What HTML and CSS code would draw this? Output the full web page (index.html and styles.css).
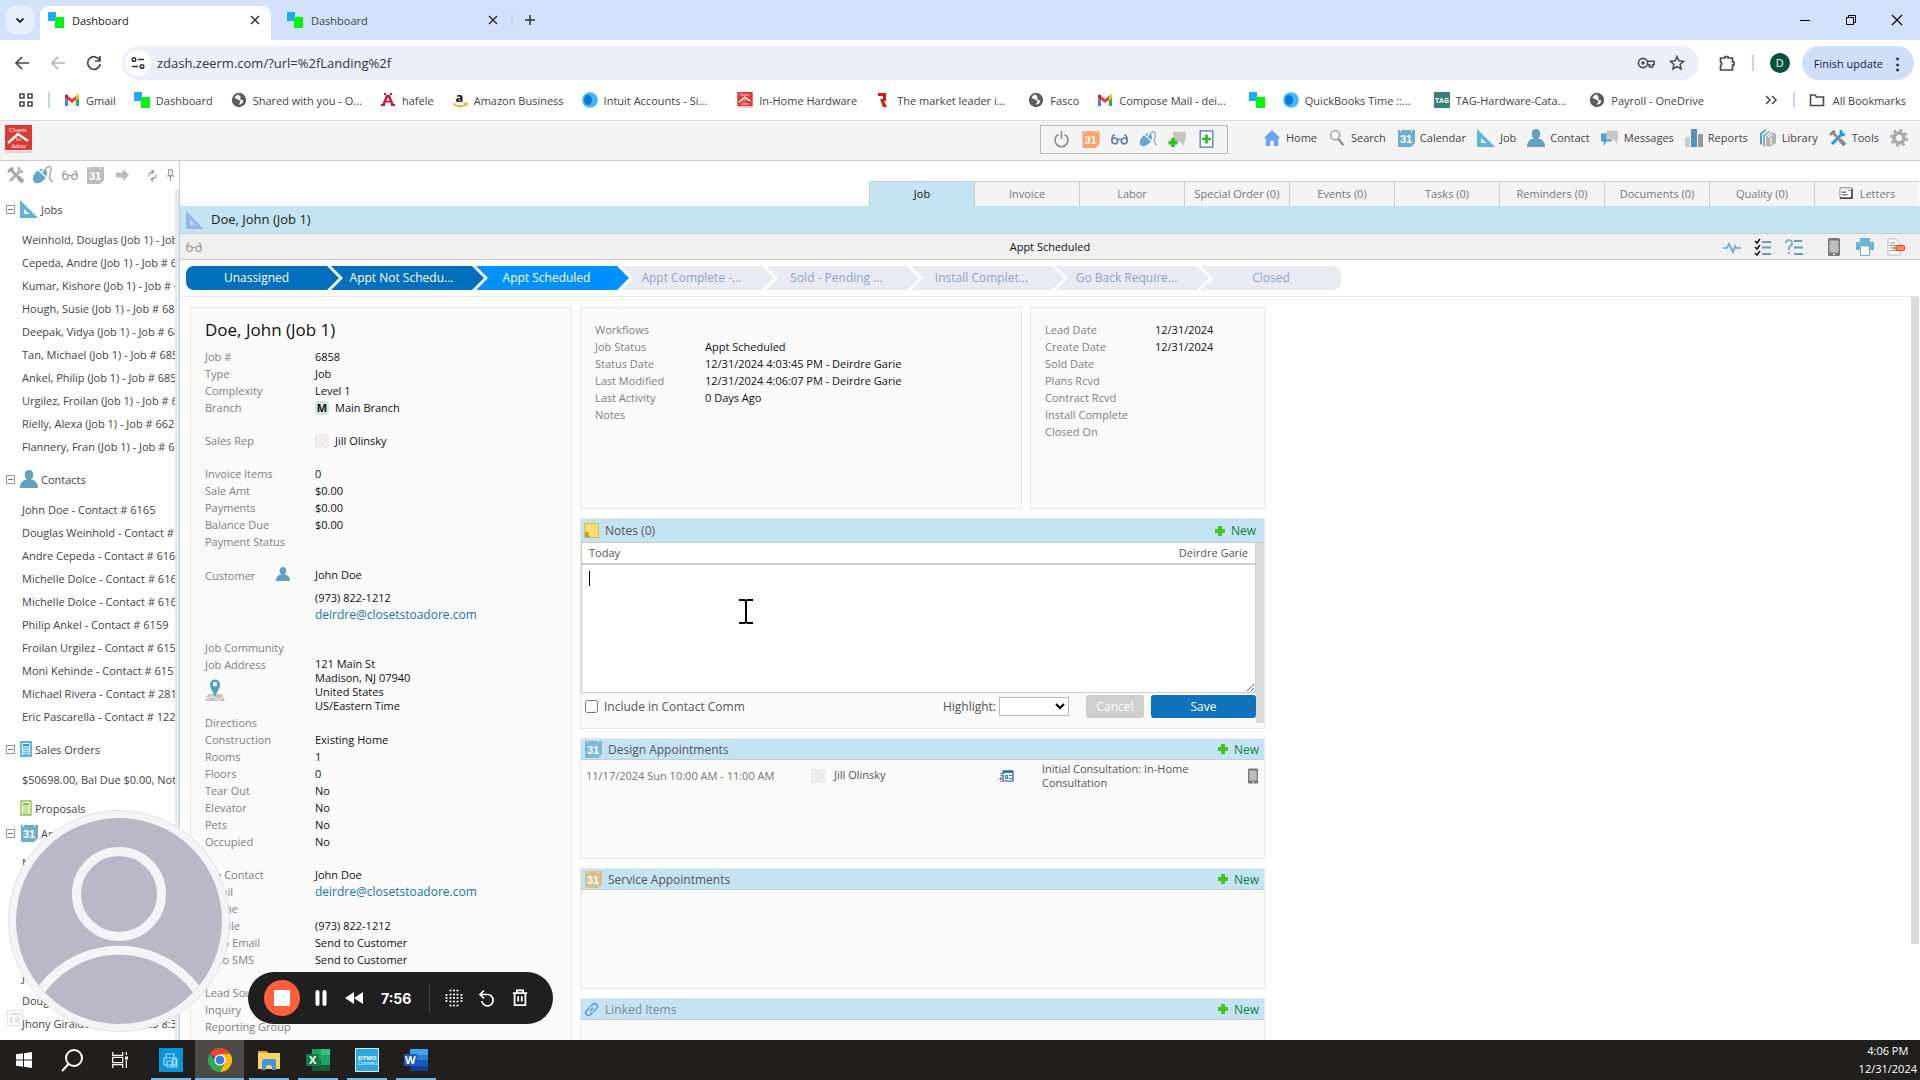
FILE: index.html
```html
<!DOCTYPE html>
<html lang="en">
<head>
  <meta charset="UTF-8" />
  <meta name="viewport" content="width=device-width, initial-scale=1.0">
  <title>Dashboard</title>
  <link rel="stylesheet" href="styles.css">
</head>
<body>

<!-- icon sprite -->
<svg class="sprite" aria-hidden="true">
  <symbol id="i-dash" viewBox="0 0 16 16"><path fill="#1fa9f9" d="M0 0h8v9H0z"/><path fill="#00f60a" d="M7 5h9v11H7z"/></symbol>
  <symbol id="i-gmail" viewBox="0 0 16 16"><path fill="#4285f4" d="M1 14V6l3 2v6z"/><path fill="#34a853" d="M12 14V8l3-2v8z"/><path fill="#ea4335" d="M4 8V4l4 3 4-3v4l-4 3z"/><path fill="#c5221f" d="M1 6V4c0-1.600 1.700-2 3-.800V8z"/><path fill="#fbbc04" d="M12 8V3.200C13.300 2 15 2.600 15 4v2z"/></symbol>
  <symbol id="i-globe" viewBox="0 0 16 16"><circle cx="8" cy="8" r="7.200" fill="#5a5d61"/><path fill="#fff" d="M9 2.500c-3 0-5 1.500-5.300 3.500 1.300 1 2.500.500 3.300 1.500.700 1 2.300.500 2.500 2 0 1.300-1.500 1.700-1.500 3.300 2.500-.300 4-2 4.300-4-1-.800-2.300-.400-3-1.500-.500-1 .7-1.500.2-2.500-.4-.8-1.500-.5-1.500-1.300z"/></symbol>
  <symbol id="i-hafele" viewBox="0 0 16 16"><path fill="#d5123d" d="M4 1h2v2H4zm6 0h2v2h-2zM6 3h4l3.500 9H15v2h-4v-2l-.6-1.500H5.600L5 12v2H1v-2h1.500zm2 2L6.300 8.800h3.400z"/></symbol>
  <symbol id="i-amazon" viewBox="0 0 16 16"><text x="3.500" y="10" class="t-amz">a</text><path d="M1.500 11.500c4 3.500 9 3.500 13 .5M12.500 11.500l2.300-.2-.6 2.400" fill="none" stroke="#f90" stroke-width="1.500"/></symbol>
  <symbol id="i-intuit" viewBox="0 0 16 16"><circle cx="8" cy="8" r="7.800" fill="#3fb7f8"/><ellipse cx="6" cy="8" rx="4" ry="5" fill="#0a78d4"/></symbol>
  <symbol id="i-closets" viewBox="0 0 27 28"><path fill="#dc3a36" d="M0 0h27v25H0z"/><path fill="#f6c9c8" d="M0 26h27v2H0z"/><path d="M3 18 13 9l10 7" fill="none" stroke="#fff" stroke-width="2.400"/><text x="4" y="7" class="t-logo">Closets</text><text x="11" y="16" class="t-logo">to</text><text x="6" y="23" class="t-logo">Adore</text></symbol>
  <symbol id="i-r" viewBox="0 0 16 16"><path fill="#da1c10" d="M3 1h8v8H9l3 6H8L5 7h3V4H3z"/></symbol>
  <symbol id="i-tag" viewBox="0 0 16 16"><path fill="#35807a" d="M0 0h16v16H0z"/><text x="1" y="11" class="t-tag">TAG</text></symbol>
  <symbol id="i-folder" viewBox="0 0 16 16"><path d="M1.500 3h4.500l1.500 2h7v8.500h-13z" fill="none" stroke="#474a4d" stroke-width="1.600"/></symbol>
  <symbol id="i-chev" viewBox="0 0 16 16"><path d="m4.500 6.500 3.500 3.500 3.500-3.500" fill="none" stroke="#202124" stroke-width="1.800"/></symbol>
  <symbol id="i-x" viewBox="0 0 16 16"><path d="m4 4 8 8m0-8-8 8" fill="none" stroke="#303235" stroke-width="1.500"/></symbol>
  <symbol id="i-add" viewBox="0 0 16 16"><path d="M8 3v10M3 8h10" fill="none" stroke="#303235" stroke-width="1.500"/></symbol>
  <symbol id="i-back" viewBox="0 0 16 16"><path d="M15 8H2m6-6L2 8l6 6" fill="none" stroke="currentColor" stroke-width="1.700"/></symbol>
  <symbol id="i-reload" viewBox="0 0 16 16"><path d="M13.500 5A6.300 6.300 0 1 0 14.200 9M14 1v5H9" fill="none" stroke="#474a4d" stroke-width="1.700"/></symbol>
  <symbol id="i-tune" viewBox="0 0 16 16"><g fill="none" stroke="#303235" stroke-width="1.500"><circle cx="4" cy="4.500" r="1.800"/><circle cx="12" cy="11.500" r="1.800"/><path d="M8 4.500h6M2 11.500h6"/></g></symbol>
  <symbol id="i-key" viewBox="0 0 18 14"><g fill="none" stroke="#474a4d" stroke-width="1.600"><circle cx="6" cy="7" r="4.600"/><circle cx="6" cy="7" r="1"/><path d="M10 5.300h7v3.400h-1.500V11h-3V8.700h-2"/></g></symbol>
  <symbol id="i-star" viewBox="0 0 16 16"><path d="m8 1.500 1.900 4.300 4.700.5-3.500 3.100 1 4.600L8 11.600 3.900 14l1-4.600L1.400 6.300l4.700-.5z" fill="none" stroke="#474a4d" stroke-width="1.500"/></symbol>
  <symbol id="i-ext" viewBox="0 0 16 16"><path d="M1.500 3H6V1.500h3V3h4.500v4H15v3h-1.500v5h-12v-4.500q2.500-1.500 0-3.500z" fill="none" stroke="#474a4d" stroke-width="1.700"/></symbol>
  <symbol id="i-apps" viewBox="0 0 16 16"><path d="M2 2h4v4H2zm8 0h4v4h-4zM2 10h4v4H2zm8 0h4v4h-4z" fill="none" stroke="#474a4d" stroke-width="1.600"/></symbol>
  <symbol id="i-more" viewBox="0 0 16 16"><path d="m3 4 4 4-4 4m6-8 4 4-4 4" fill="none" stroke="#474a4d" stroke-width="1.500"/></symbol>

  <symbol id="i-power" viewBox="0 0 16 18"><path d="M5 4.500a6.500 6.500 0 1 0 6 0M8 1v8" fill="none" stroke="#8a8a8a" stroke-width="1.600"/></symbol>
  <symbol id="i-cal" viewBox="0 0 18 18"><path fill="currentColor" d="M1 1h2v2h1V1h10v2h1V1h3v13l-4 4H1z"/><text x="3" y="14" class="t-cal">31</text></symbol>
  <symbol id="i-glasses" viewBox="0 0 20 14"><g fill="none" stroke="currentColor" stroke-width="1.700"><circle cx="5" cy="9" r="3"/><circle cx="15" cy="9" r="3"/><path d="M8 8q2-1.500 4 0M2 8q0-5 3-5.500M18 8q0-5-3-5.500"/></g></symbol>
  <symbol id="i-mouse" viewBox="0 0 22 20"><ellipse cx="8" cy="11" rx="5.600" ry="8.500" transform="rotate(42 8 11)" fill="#5fa9d0"/><path d="m6 5 8 7M12 4 9 8" stroke="#fff" stroke-width="1.300"/><path d="M13 5q3-5 5-3t0 7 3 8" fill="none" stroke="#9aa5ab" stroke-width="1.400"/></symbol>
  <symbol id="i-msgadd" viewBox="0 0 20 20"><path fill="#c4c4c4" d="M5 2h14v11h-2v5l-4-5H5z"/><path fill="#2dc422" d="M3 9h4v3h3v4H7v3H3v-3H0v-4h3z"/></symbol>
  <symbol id="i-docadd" viewBox="0 0 16 20"><path fill="#fff" stroke="#4d78ad" stroke-width="1.400" d="M1 1h14v18H1z"/><path fill="#20bf20" d="M6.500 5h3v3.500H13v3H9.500V15h-3v-3.500H3v-3h3.500z"/></symbol>
  <symbol id="i-home" viewBox="0 0 20 20"><path fill="#6ba5ec" d="m10 1 9 9h-2v9h-5v-6H8v6H3v-9H1z"/></symbol>
  <symbol id="i-search" viewBox="0 0 18 20"><circle cx="7" cy="7" r="5" fill="#fff" stroke="#9d9d9d" stroke-width="1.700"/><path d="m10.500 11 5.500 7" stroke="#8e8e8e" stroke-width="2.600"/></symbol>
  <symbol id="i-tri" viewBox="0 0 18 18"><path fill="currentColor" fill-rule="evenodd" d="M0 0v18h18zM4 9v5h5.500z"/></symbol>
  <symbol id="i-person" viewBox="0 0 18 18"><path fill="#62a1c0" d="M9 0c5.500 0 5 8 2 9.500 4 .5 7 3 7 8.500H0c0-5.500 3-8 7-8.500C4 8 3.500 0 9 0"/></symbol>
  <symbol id="i-msgs" viewBox="0 0 20 18"><path fill="#4ba2d6" d="M0 4h12v9H6l-3 5v-5H0z"/><path fill="#c8c8c8" d="M6 1h13v10h-1v5l-4-5H6z"/></symbol>
  <symbol id="i-chart" viewBox="0 0 18 18"><path fill="#ccc" d="M0 8h5v10H0z"/><path fill="#5093c0" d="M6 0h6v18H6z"/><path fill="#999" d="M13 5h5v13h-5z"/></symbol>
  <symbol id="i-library" viewBox="0 0 18 18"><path fill="#589dc9" d="m1 4 6-4v2L3 5v11l-2-1z"/><path fill="#7fb2cf" d="m4 6 6-4 1 1-5 4v11l-2-1z"/><path fill="#b3b3b3" d="m7 8 6-5 4 2v9l-6 4-4-1z"/><path d="m9 8 5-3M12 8v8" stroke="#f4f4f4" stroke-width="1.200"/></symbol>
  <symbol id="i-tools" viewBox="0 0 18 18"><path d="M3 15 14 4" stroke="var(--w, #1a9be6)" stroke-width="3"/><path d="M12 1v4l4 1" fill="none" stroke="var(--w, #1a9be6)" stroke-width="2.600"/><path d="M4 4l10 10M1 6l4-4M3 5l3-3" stroke="var(--g, #8d8d8d)" stroke-width="2.600"/><path d="m11 11 5 5" stroke="var(--g, #8d8d8d)" stroke-width="4"/></symbol>
  <symbol id="i-gear" viewBox="0 0 20 20"><circle cx="10" cy="10" r="5.500" fill="none" stroke="#ababab" stroke-width="4"/><circle cx="10" cy="10" r="8.500" fill="none" stroke="#ababab" stroke-width="3" stroke-dasharray="3.340 3.340"/></symbol>
  <symbol id="i-letter" viewBox="0 0 16 14"><path fill="#fff" stroke="#777" d="M1 1h14v12H1z"/><path d="M1 13h14V2" fill="none" stroke="#222" stroke-width="1.500"/><path d="M3 6h5M3 9h7M11 4h2" stroke="#555" stroke-width="1.300"/></symbol>
  <symbol id="i-arrow" viewBox="0 0 14 12"><path fill="#b9b9b9" d="M0 3.500h7V0l6 6-6 6V8.500H0z"/></symbol>
  <symbol id="i-refresh" viewBox="0 0 12 14"><path d="M2 8q0-5 5-5M5 .5 7.500 3 5 5.500M10 6q0 5-5 5m2-2.500L4.500 11 7 13.500" fill="none" stroke="#999" stroke-width="1.200"/></symbol>
  <symbol id="i-pin" viewBox="0 0 10 14"><path d="M3 1h4v6H3zM1 7.500h8M5 8v5" fill="none" stroke="#999" stroke-width="1.200"/></symbol>
  <symbol id="i-doc" viewBox="0 0 12 16"><path fill="#fff" stroke="currentColor" stroke-width="1.400" d="M1 1h10v14H1z"/><path d="M3 4.200h6" stroke="currentColor" stroke-width="2.400"/><path d="M3 7h6M3 9.200h6M3 11.200h6M3 13.200h6" stroke="currentColor"/></symbol>
  <symbol id="i-grid" viewBox="0 0 16 16"><path d="M1 1h6v6H1zm8 0h6v6H9zM1 9h6v6H1zm8 0h6v6H9z" fill="#f3f3f3" stroke="#e0e0e0"/></symbol>
  <symbol id="i-map" viewBox="0 0 20 22"><path fill="#c4c4c4" d="m3 15-3 7h20l-3-7z"/><path d="m1 20 7-3 5 4 5-3" stroke="#f5f5f5" fill="none"/><path fill="#519fc0" fill-rule="evenodd" d="M10 18C8 12 5 10 5 5.500a5 5 0 0 1 10 0C15 10 12 12 10 18m0-10.500a2.200 2.200 0 1 0 0-4.400 2.200 2.200 0 0 0 0 4.400"/></symbol>
  <symbol id="i-pulse" viewBox="0 0 18 14"><path d="M0 8h4l2-4 4 8 2-6 1 2h5" fill="none" stroke="#6aa9cf" stroke-width="1.700"/></symbol>
  <symbol id="i-check" viewBox="0 0 18 18"><path d="m1 3 2 2 3-4M1 9l2 2 3-4M1 15l2 2 3-4" fill="none" stroke="#111" stroke-width="1.500"/><path d="M8 4h9M8 9.500h9M8 16h9" stroke="#5ba1bf" stroke-width="2.200"/></symbol>
  <symbol id="i-quest" viewBox="0 0 18 18"><path d="M1 5q0-3 3-3t3 3-3 4v3M4 14v2" fill="none" stroke="#6aa9cf" stroke-width="1.700"/><path d="M9 3h8M9 9.500h9M9 16h9" stroke="#5ba1bf" stroke-width="2.200"/></symbol>
  <symbol id="i-phone" viewBox="0 0 12 18"><rect width="12" height="18" rx="1.500" fill="#777"/><path fill="#bebebe" d="M1.500 2.500h9v12h-9z"/><circle cx="6" cy="16.200" r="1" fill="#fff"/></symbol>
  <symbol id="i-print" viewBox="0 0 18 18"><path fill="#6fb3d0" d="M4 0h10v4h4v8H0V4h4z"/><path fill="#fff" stroke="#6fb3d0" d="M4.500 8h9v9.500h-9z"/></symbol>
  <symbol id="i-docdel" viewBox="0 0 18 18"><path fill="#fff" stroke="#bbb" d="M1 1h8l4 4v12H1z"/><path d="M3 5h5M3 7.500h7M3 10h7M3 12.500h7" stroke="#999"/><path d="M6 10h4" stroke="#d33"/><rect x="9" y="7.500" width="8.500" height="5" rx="1" fill="#fb8a5c" stroke="#e8431f"/></symbol>
  <symbol id="i-plus" viewBox="0 0 12 12"><path fill="#41c61f" d="M4 1h4v3h3v4H8v3H4V8H1V4h3z"/></symbol>
  <symbol id="i-note" viewBox="0 0 14 14"><path fill="#f7e06b" stroke="#dfc045" d="M.5.500h13v13H6l-5.500-5z"/><path fill="#c39a2c" d="M.5 9c2-1 4-.5 4 1 0 1-1 1-1 0L6 13.500H.5z"/></symbol>
  <symbol id="i-card" viewBox="0 0 16 14"><path fill="#fff" stroke="#2452a6" stroke-width="1.200" d="M5 2h10v10H5z"/><path fill="#2f6bd0" d="M5 1.500h10V4H5z"/><path d="M7.500 6.500h2v3h-2z" fill="none" stroke="#2f6bd0"/><path d="M11 6.500h3M11 9.500h3" stroke="#2f6bd0"/><path d="M3 4v9M0 10h3" stroke="#222" stroke-dasharray="1 1"/></symbol>
  <symbol id="i-link" viewBox="0 0 16 16"><g fill="none" stroke="#5aa3ce" stroke-width="1.800" transform="rotate(-45 8 8)"><path d="M8 5H3.500a3 3 0 0 0 0 6H7"/><path d="M8 11h4.500a3 3 0 0 0 0-6H9M5.500 8h5"/></g></symbol>
</svg>

<header class="browser">
  <div class="tabstrip">
    <button class="tab-search" aria-label="Search tabs"><svg><use href="#i-chev"/></svg></button>
    <div class="btab active"><svg><use href="#i-dash"/></svg><span>Dashboard</span><button aria-label="Close tab"><svg><use href="#i-x"/></svg></button></div>
    <div class="btab"><svg><use href="#i-dash"/></svg><span>Dashboard</span><button aria-label="Close tab"><svg><use href="#i-x"/></svg></button></div>
    <i class="vsep"></i>
    <button class="newtab" aria-label="New tab"><svg><use href="#i-add"/></svg></button>
    <div class="winbtns">
      <button aria-label="Minimize"><svg viewBox="0 0 12 12"><path d="M1 6.500h10" stroke="#000"/></svg></button>
      <button aria-label="Restore"><svg viewBox="0 0 12 12"><path d="M1.500 3.500h7v7h-7zM3.500 3.500v-2h7v7h-2" fill="none" stroke="#000"/></svg></button>
      <button aria-label="Close"><svg viewBox="0 0 12 12"><path d="m1 1 10 10M11 1 1 11" stroke="#000" stroke-width="1.200"/></svg></button>
    </div>
  </div>
  <div class="toolbar">
    <button aria-label="Back"><svg><use href="#i-back"/></svg></button>
    <button class="fwd" aria-label="Forward"><svg><use href="#i-back"/></svg></button>
    <button aria-label="Reload"><svg><use href="#i-reload"/></svg></button>
    <div class="omnibox">
      <span class="site"><svg><use href="#i-tune"/></svg></span>
      <input type="text" aria-label="Address" value="zdash.zeerm.com/?url=%2fLanding%2f">
      <svg class="key"><use href="#i-key"/></svg>
      <svg><use href="#i-star"/></svg>
    </div>
    <svg class="ext"><use href="#i-ext"/></svg>
    <i class="vsep"></i>
    <span class="profile">D</span>
    <button class="update">Finish update <b>⋮</b></button>
  </div>
  <nav class="bookmarks">
    <svg class="apps"><use href="#i-apps"/></svg>
    <i class="vsep"></i>
    <a href="#"><svg><use href="#i-gmail"/></svg>Gmail</a>
    <a href="#"><svg><use href="#i-dash"/></svg>Dashboard</a>
    <a href="#"><svg><use href="#i-globe"/></svg>Shared with you - O...</a>
    <a href="#"><svg><use href="#i-hafele"/></svg>hafele</a>
    <a href="#"><svg><use href="#i-amazon"/></svg>Amazon Business</a>
    <a href="#" class="longer"><svg><use href="#i-intuit"/></svg>Intuit Accounts - Si...</a>
    <a href="#"><svg><use href="#i-closets"/></svg>In-Home Hardware</a>
    <a href="#" class="long"><svg><use href="#i-r"/></svg>The market leader i...</a>
    <a href="#"><svg><use href="#i-globe"/></svg>Fasco</a>
    <a href="#" class="long"><svg><use href="#i-gmail"/></svg>Compose Mail - dei...</a>
    <a href="#" aria-label="Dashboard"><svg><use href="#i-dash"/></svg></a>
    <a href="#" class="long"><svg><use href="#i-intuit"/></svg>QuickBooks Time ::...</a>
    <a href="#" class="long"><svg><use href="#i-tag"/></svg>TAG-Hardware-Cata...</a>
    <a href="#"><svg><use href="#i-globe"/></svg>Payroll - OneDrive</a>
    <svg class="more"><use href="#i-more"/></svg>
    <i class="vsep"></i>
    <a href="#" class="all"><svg><use href="#i-folder"/></svg>All Bookmarks</a>
  </nav>
</header>

<header class="apphead">
  <svg class="logo"><use href="#i-closets"/></svg>
  <div class="quick">
    <svg><use href="#i-power"/></svg>
    <svg class="orange"><use href="#i-cal"/></svg>
    <svg class="navy"><use href="#i-glasses"/></svg>
    <svg><use href="#i-mouse"/></svg>
    <svg><use href="#i-msgadd"/></svg>
    <svg><use href="#i-docadd"/></svg>
  </div>
  <nav class="mainnav">
    <a href="#"><svg><use href="#i-home"/></svg>Home</a>
    <a href="#"><svg><use href="#i-search"/></svg>Search</a>
    <a href="#"><svg class="blue"><use href="#i-cal"/></svg>Calendar</a>
    <a href="#"><svg class="sky"><use href="#i-tri"/></svg>Job</a>
    <a href="#"><svg><use href="#i-person"/></svg>Contact</a>
    <a href="#"><svg><use href="#i-msgs"/></svg>Messages</a>
    <a href="#"><svg><use href="#i-chart"/></svg>Reports</a>
    <a href="#"><svg><use href="#i-library"/></svg>Library</a>
    <a href="#"><svg><use href="#i-tools"/></svg>Tools</a>
    <a href="#" aria-label="Settings"><svg><use href="#i-gear"/></svg></a>
  </nav>
</header>

<div class="app">
  <aside class="sidebar">
    <div class="sidetools">
      <svg class="graytools"><use href="#i-tools"/></svg>
      <svg class="wide"><use href="#i-mouse"/></svg>
      <svg class="gray"><use href="#i-glasses"/></svg>
      <svg class="lgray"><use href="#i-cal"/></svg>
      <svg class="arrow"><use href="#i-arrow"/></svg>
      <svg class="tiny"><use href="#i-refresh"/></svg>
      <svg class="tiny"><use href="#i-pin"/></svg>
    </div>
    <div class="tree">
      <h3><i class="minus"></i><svg class="sky"><use href="#i-tri"/></svg>Jobs</h3>
      <ul>
        <li>Weinhold, Douglas (Job 1) - Job # 6857</li>
        <li>Cepeda, Andre (Job 1) - Job # 6856</li>
        <li>Kumar, Kishore (Job 1) - Job # 6855</li>
        <li>Hough, Susie (Job 1) - Job # 6854</li>
        <li>Deepak, Vidya (Job 1) - Job # 6853</li>
        <li>Tan, Michael (Job 1) - Job # 6852</li>
        <li>Ankel, Philip (Job 1) - Job # 6851</li>
        <li>Urgilez, Froilan (Job 1) - Job # 6850</li>
        <li>Rielly, Alexa (Job 1) - Job # 6620</li>
        <li>Flannery, Fran (Job 1) - Job # 6849</li>
      </ul>
      <h3><i class="minus"></i><svg><use href="#i-person"/></svg>Contacts</h3>
      <ul>
        <li>John Doe - Contact # 6165</li>
        <li>Douglas Weinhold - Contact # 6164</li>
        <li>Andre Cepeda - Contact # 6163</li>
        <li>Michelle Dolce - Contact # 6162</li>
        <li>Michelle Dolce - Contact # 6161</li>
        <li>Philip Ankel - Contact # 6159</li>
        <li>Froilan Urgilez - Contact # 6158</li>
        <li>Moni Kehinde - Contact # 6157</li>
        <li>Michael Rivera - Contact # 281</li>
        <li>Eric Pascarella - Contact # 1229</li>
      </ul>
      <h3><i class="minus"></i><svg class="doc cyan"><use href="#i-doc"/></svg>Sales Orders</h3>
      <ul>
        <li>$50698.00, Bal Due $0.00, Not Paid</li>
      </ul>
      <h3 class="leaf"><svg class="doc lime"><use href="#i-doc"/></svg>Proposals</h3>
      <h3 class="tight"><i class="minus"></i><svg class="blue"><use href="#i-cal"/></svg>Appointments</h3>
      <ul>
        <li>N</li>
        <li></li>
        <li></li>
        <li></li>
        <li></li>
        <li>J</li>
        <li>Doug</li>
        <li>Jhony Giraldo - 12/31/2025 8:30</li>
      </ul>
    </div>
  </aside>

  <main class="main">
    <nav class="jobtabs">
      <a href="#" class="on">Job</a>
      <a href="#">Invoice</a>
      <a href="#">Labor</a>
      <a href="#">Special Order (0)</a>
      <a href="#">Events (0)</a>
      <a href="#">Tasks (0)</a>
      <a href="#">Reminders (0)</a>
      <a href="#">Documents (0)</a>
      <a href="#">Quality (0)</a>
      <a href="#"><svg><use href="#i-letter"/></svg>Letters</a>
    </nav>
    <h1 class="titlebar"><svg><use href="#i-tri"/></svg>Doe, John (Job 1)</h1>
    <div class="statusbar">
      <div class="left"><svg class="gray"><use href="#i-glasses"/></svg></div>
      <span>Appt Scheduled</span>
      <div class="right">
        <svg><use href="#i-pulse"/></svg>
        <svg><use href="#i-check"/></svg>
        <svg><use href="#i-quest"/></svg>
        <svg class="phone"><use href="#i-phone"/></svg>
        <svg><use href="#i-print"/></svg>
        <svg><use href="#i-docdel"/></svg>
      </div>
    </div>
    <ol class="steps">
      <li class="done">Unassigned</li>
      <li class="done">Appt Not Schedu...</li>
      <li class="now">Appt Scheduled</li>
      <li>Appt Complete -...</li>
      <li>Sold - Pending ...</li>
      <li>Install Complet...</li>
      <li>Go Back Require...</li>
      <li>Closed</li>
    </ol>

    <div class="content">
      <section class="panel details">
        <h2>Doe, John (Job 1)</h2>
        <dl>
          <dt>Job #</dt><dd>6858</dd>
          <dt>Type</dt><dd>Job</dd>
          <dt>Complexity</dt><dd>Level 1</dd>
          <dt>Branch</dt><dd class="ic"><span class="mbadge">M</span>Main Branch</dd>
        </dl>
        <dl>
          <dt>Sales Rep</dt><dd class="ic"><svg><use href="#i-grid"/></svg>Jill Olinsky</dd>
        </dl>
        <dl>
          <dt>Invoice Items</dt><dd>0</dd>
          <dt>Sale Amt</dt><dd>$0.00</dd>
          <dt>Payments</dt><dd>$0.00</dd>
          <dt>Balance Due</dt><dd>$0.00</dd>
          <dt>Payment Status</dt><dd></dd>
        </dl>
        <dl>
          <dt class="cust">Customer<svg><use href="#i-person"/></svg></dt>
          <dd class="stack"><span>John Doe</span><span>(973) 822-1212</span><a href="#">deirdre@closetstoadore.com</a></dd>
        </dl>
        <dl>
          <dt>Job Community</dt><dd></dd>
          <dt>Job Address<svg class="map"><use href="#i-map"/></svg></dt>
          <dd class="addr">121 Main St<br>Madison, NJ 07940<br>United States<br>US/Eastern Time</dd>
          <dt>Directions</dt><dd></dd>
          <dt>Construction</dt><dd>Existing Home</dd>
          <dt>Rooms</dt><dd>1</dd>
          <dt>Floors</dt><dd>0</dd>
          <dt>Tear Out</dt><dd>No</dd>
          <dt>Elevator</dt><dd>No</dd>
          <dt>Pets</dt><dd>No</dd>
          <dt>Occupied</dt><dd>No</dd>
        </dl>
        <dl>
          <dt>Job Contact</dt><dd>John Doe</dd>
          <dt>Email</dt><dd><a href="#">deirdre@closetstoadore.com</a></dd>
          <dt>Phone</dt><dd></dd>
          <dt>Mobile</dt><dd>(973) 822-1212</dd>
          <dt>Auto Email</dt><dd>Send to Customer</dd>
          <dt>Auto SMS</dt><dd>Send to Customer</dd>
        </dl>
        <dl>
          <dt>Lead Source</dt><dd></dd>
          <dt>Inquiry</dt><dd></dd>
          <dt>Reporting Group</dt><dd></dd>
        </dl>
      </section>

      <div class="right-col">
        <div class="summary">
          <section class="panel">
            <dl>
              <dt>Workflows</dt><dd></dd>
              <dt>Job Status</dt><dd>Appt Scheduled</dd>
              <dt>Status Date</dt><dd>12/31/2024 4:03:45 PM - Deirdre Garie</dd>
              <dt>Last Modified</dt><dd>12/31/2024 4:06:07 PM - Deirdre Garie</dd>
              <dt>Last Activity</dt><dd>0 Days Ago</dd>
              <dt>Notes</dt><dd></dd>
            </dl>
          </section>
          <section class="panel">
            <dl>
              <dt>Lead Date</dt><dd>12/31/2024</dd>
              <dt>Create Date</dt><dd>12/31/2024</dd>
              <dt>Sold Date</dt><dd></dd>
              <dt>Plans Rcvd</dt><dd></dd>
              <dt>Contract Rcvd</dt><dd></dd>
              <dt>Install Complete</dt><dd></dd>
              <dt>Closed On</dt><dd></dd>
            </dl>
          </section>
        </div>

        <section class="panel block notes">
          <h2><svg class="note"><use href="#i-note"/></svg>Notes (0)<a href="#" class="new"><svg><use href="#i-plus"/></svg>New</a></h2>
          <div class="noteform">
            <div class="notebody">
              <div class="notehead"><span>Today</span><span>Deirdre Garie</span></div>
              <div class="notearea">
                <textarea aria-label="Note"></textarea>
                <i class="caret"></i>
              </div>
              <div class="noteactions">
                <input type="checkbox" id="comm"><label for="comm">Include in Contact Comm</label>
                <label for="hl" class="hl">Highlight:</label>
                <select id="hl"><option></option></select>
                <button class="cancel">Cancel</button>
                <button class="save">Save</button>
              </div>
            </div>
            <i class="scroll"></i>
          </div>
        </section>

        <section class="panel block">
          <h2><svg class="blue dim"><use href="#i-cal"/></svg>Design Appointments<a href="#" class="new"><svg><use href="#i-plus"/></svg>New</a></h2>
          <table>
            <tr>
              <td class="when">11/17/2024 Sun 10:00 AM - 11:00 AM</td>
              <td class="who"><svg><use href="#i-grid"/></svg>Jill Olinsky</td>
              <td class="card"><svg><use href="#i-card"/></svg></td>
              <td class="what">Initial Consultation: In-Home Consultation</td>
              <td class="tel"><svg><use href="#i-phone"/></svg></td>
            </tr>
          </table>
        </section>

        <section class="panel block">
          <h2><svg class="tan"><use href="#i-cal"/></svg>Service Appointments<a href="#" class="new"><svg><use href="#i-plus"/></svg>New</a></h2>
        </section>

        <section class="panel block">
          <h2 class="soft"><svg class="link"><use href="#i-link"/></svg>Linked Items<a href="#" class="new"><svg><use href="#i-plus"/></svg>New</a></h2>
        </section>
      </div>
      <i class="scroll page"></i>
    </div>
  </main>
</div>

<footer class="taskbar">
  <button aria-label="Start"><svg viewBox="0 0 16 16"><path fill="#fff" d="m0 2.300 7-1v6.200H0zM8 1.200 16 0v7.500H8zM0 8.500h7v6.200l-7-1zm8 0h8V16l-8-1.200z"/></svg></button>
  <button aria-label="Search"><svg class="lg" viewBox="0 0 24 24"><circle cx="14" cy="10" r="8" fill="none" stroke="#fff" stroke-width="2"/><path d="m8.500 16-6.500 7" stroke="#fff" stroke-width="2"/></svg></button>
  <button class="tv" aria-label="Task view"><svg viewBox="0 0 16 16"><path d="M.7 0v3.300h10V0M.7 16v-3.300h10V16M.7 5.300h10v5.400H.7zM14.300 0v3M14.300 8v8" fill="none" stroke="#fff" stroke-width="1.200"/><path fill="#fff" d="M13 4.500h3v3h-3z"/></svg></button>
  <button class="run" aria-label="Label printer"><svg class="lg" viewBox="0 0 24 24"><path fill="#0a93d6" d="M0 0h24v24H0z"/><path d="M7 10V6h8v4M5 10h12v7H5zm3 3h5v6H8zM14 11h4v8h-4z" fill="none" stroke="#a5def8" stroke-width="1.200"/></svg></button>
  <button class="run current" aria-label="Chrome"><svg class="lg" viewBox="0 0 24 24"><path fill="#ea4335" d="M12 12 1.600 6a12 12 0 0 1 20.800 0z"/><path fill="#fbbc04" d="M12 12V6h10.400A12 12 0 0 1 12 24l4-10z"/><path fill="#34a853" d="M1.600 6A12 12 0 0 0 12 24l5-9H9z"/><circle cx="12" cy="12" r="5.600" fill="#fff"/><circle cx="12" cy="12" r="4.400" fill="#3b7ded"/></svg></button>
  <button class="run" aria-label="File Explorer"><svg class="lg" viewBox="0 0 24 24"><path fill="#e2a220" d="M1 3h9l2 3H1z"/><path fill="#fbd264" d="M1 5h22v16H1z"/><path fill="#3f97dc" d="M5 13q0-2 2-2h10q2 0 2 2v9h-4v-4q-3-2-6 0v4H5z"/></svg></button>
  <button class="run" aria-label="Excel"><svg class="lg" viewBox="0 0 24 24"><path fill="#21a366" d="M6 1h18v22H6z"/><path fill="#33c481" d="M15 1h9v6h-9z"/><path fill="#107c41" d="M6 12h9v6H6z"/><path fill="#185c37" d="M6 17h18v6H6z"/><path fill="#107c41" d="M0 6h13v12H0z"/><text x="3" y="16" class="t-app">X</text></svg></button>
  <button class="run" aria-label="DYMO Connect"><svg class="lg" viewBox="0 0 24 24"><path fill="#2aa9e0" stroke="#d5f0fb" d="M.5.500h23v23H.5z"/><text x="3" y="12" class="t-dymo">DYMO</text><text x="3" y="17" class="t-conn">Connect</text></svg></button>
  <button class="run" aria-label="Word"><svg class="lg" viewBox="0 0 24 24"><path fill="#41a5ee" d="M6 1h18v6H6z"/><path fill="#2b7cd3" d="M6 7h18v5H6z"/><path fill="#185abd" d="M6 12h18v6H6z"/><path fill="#103f91" d="M6 18h18v5H6z"/><path fill="#185abd" d="M0 6h13v12H0z"/><text x="1" y="16" class="t-app">W</text></svg></button>
  <div class="clock">4:06 PM<br>12/31/2024</div>
</footer>

<!-- floating over the page -->
<svg class="tooltab" aria-hidden="true" viewBox="0 0 16 16"><path fill="#fafafa" stroke="#e3e3e3" d="M.5.500h15v15H.5z"/><path fill="#e3e3e3" d="M3 3h10v2H3zm0 4h3v6H3zm5 0h5v6H8z"/></svg>
<svg class="avatar" viewBox="0 0 222 222" aria-hidden="true">
  <circle cx="111" cy="111" r="110.500" fill="#f4f4f7" stroke="#dfe1e4"/>
  <clipPath id="face"><circle cx="111" cy="111" r="103"/></clipPath>
  <circle cx="111" cy="111" r="103" fill="#bab8c6"/>
  <g fill="none" stroke="#f4f4f7" stroke-width="9" clip-path="url(#face)"><circle cx="111" cy="84" r="42.500"/><path d="M28 188a96 96 0 0 1 166 0"/></g>
</svg>
<div class="recorder">
  <button class="stop" aria-label="Stop"></button>
  <button aria-label="Pause"><svg viewBox="0 0 18 18"><path d="M5.500 3v12M12.500 3v12" stroke="#fff" stroke-width="4" stroke-linecap="round"/></svg></button>
  <button aria-label="Rewind"><svg viewBox="0 0 18 18"><path fill="#fff" d="M9 3v12L0 9zm9 0v12L9 9z"/></svg></button>
  <span>7:56</span>
  <i></i>
  <button aria-label="Effects"><svg viewBox="0 0 18 18"><path d="M5.500 1.500h0M9 1.500h0M12.500 1.500h0M1.500 6h0M5.500 5.500h0M9 5.500h0M12.500 5.500h0M16.500 6h0M1.500 12h0M5.500 9h0M9 9h0M12.500 9h0M16.500 12h0M5.500 12.500h0M9 12.500h0M12.500 12.500h0M5.500 16.500h0M9 16.500h0M12.500 16.500h0M1.500 9h0M16.500 9h0" stroke="#fff" stroke-width="2.200" stroke-linecap="round"/></svg></button>
  <button aria-label="Restart"><svg viewBox="0 0 18 18"><path d="M3 5.500h6.500a5.700 5.700 0 1 1-5.700 6.500M6 1.500l-4 4 4 4" fill="none" stroke="#fff" stroke-width="1.700"/></svg></button>
  <button aria-label="Delete"><svg viewBox="0 0 18 20"><path d="M1 4.500h16M5.500 4V1.500h7V4M3 4.500V18h12V4.500M7 8v6M11 8v6" fill="none" stroke="#fff" stroke-width="2"/></svg></button>
</div>
<svg class="ibeam" viewBox="0 0 14 25" aria-hidden="true"><path d="M0 1h5.500L7 2l1.500-1H14M7 2v21M0 24h5.500L7 23l1.500 1H14" fill="none" stroke="#000" stroke-width="2"/></svg>

</body>
</html>
```
FILE: styles.css
```css
* { box-sizing: border-box; }
body {
  margin: 0;
  height: 100vh;
  display: flex;
  flex-direction: column;
  overflow: hidden;
  background: #fff;
  color: #444;
  font: 11px/17px "Open Sans", "Noto Sans", sans-serif;
}
h1, h2, h3, ul, ol, dl, dd { margin: 0; padding: 0; font-size: 11px; font-weight: normal; }
ul, ol { list-style: none; }
a { color: inherit; text-decoration: none; }
button { border: 0; padding: 0; background: none; font: inherit; color: inherit; display: flex; align-items: center; justify-content: center; }
svg { flex: none; width: 18px; height: 18px; }
.sprite { display: none; }

/* icon lettering */
.t-amz { font: bold 13px "Open Sans", sans-serif; fill: #111; }
.t-logo { font: 6px "Liberation Serif", serif; fill: #fff; }
.t-tag { font: bold 7px "Open Sans", sans-serif; fill: #fff; }
.t-cal { font: bold 11px "Liberation Sans", sans-serif; fill: #fff; }
.t-app { font: bold 11px "Open Sans", sans-serif; fill: #fff; }
.t-dymo { font: bold 6px "Open Sans", sans-serif; fill: #fff; }
.t-conn { font: 5px "Open Sans", sans-serif; fill: #fff; }

/* icon colours */
.orange { color: #fba468; }
.navy { color: #5b7fb8; }
.blue { color: #6fadd0; }
.sky { color: #5db5d8; }
.gray { color: #a8a8a8; }
.lgray { color: #bdbdbd; }
.cyan { color: #1c9ed0; }
.lime { color: #8fc043; }
.tan { color: #d8c08a; }
.graytools { --w: #b5b5b5; --g: #a3a3a3; }

/* browser */
.tabstrip { display: flex; align-items: center; height: 40px; padding-left: 6px; background: #d3e2fb; }
.tabstrip svg { width: 16px; height: 16px; }
.tab-search { width: 28px; height: 28px; margin-right: 6px; border-radius: 9px; background: #e9f0fd; }
.btab { display: flex; align-items: center; gap: 8px; width: 231px; height: 34px; margin-top: 6px; padding: 0 8px 6px; }
.btab span { flex: 1; }
.btab.active { background: #fff; border-radius: 9px 9px 0 0; color: #222; }
.btab + .btab { width: 240px; padding: 0 10px 6px 16px; }
.vsep { width: 2px; height: 16px; background: #c3d7f8; }
.newtab { margin-left: 9px; }
.winbtns { display: flex; margin-left: auto; }
.winbtns button { width: 46px; height: 40px; }
.winbtns svg { width: 12px; height: 12px; }
.toolbar { display: flex; align-items: center; height: 46px; padding: 0 6px 0 14px; color: #474a4d; }
.toolbar svg { width: 16px; height: 16px; }
.toolbar > button:not(.update) { width: 16px; margin-right: 20px; }
.toolbar .fwd { color: #b2b4b7; }
.omnibox { display: flex; flex: 1; align-items: center; gap: 14px; height: 34px; padding: 0 14px 0 3px; border-radius: 17px; background: #ebeff9; }
.site { display: flex; align-items: center; justify-content: center; width: 26px; height: 26px; border-radius: 50%; background: #fff; }
.omnibox input { flex: 1; margin-left: -8px; padding: 0; border: 0; background: none; color: #33363a; font: 13px/20px "Open Sans", sans-serif; }
.omnibox .key { width: 18px; height: 14px; }
.toolbar .ext { margin: 0 17px 0 20px; }
.profile { width: 20px; height: 20px; margin: 0 12px 0 16px; border-radius: 50%; background: #04513d; color: #fff; text-align: center; line-height: 20px; }
.update { gap: 6px; height: 34px; padding: 0 8px 0 12px; border-radius: 17px; background: #cfdff9; color: #0b2350; }
.update b { font-size: 17px; }
.bookmarks { display: flex; align-items: center; gap: 18px; height: 35px; padding: 0 14px 6px 18px; border-bottom: 1px solid #ddd; white-space: nowrap; }
.bookmarks svg { width: 16px; height: 16px; }
.bookmarks .vsep { margin: 0 -4px; }
.bookmarks a { display: flex; align-items: center; gap: 6px; }
.bookmarks .long { margin-right: 5px; }
.bookmarks .longer { margin-right: 12px; }
.bookmarks .more { margin-left: auto; }
.bookmarks .all { gap: 8px; }

/* app header */
.apphead { display: flex; align-items: center; height: 40px; padding: 0 12px 3px 5px; background: #f4f4f4; border-bottom: 1px solid #ccc; }
.logo { width: 27px; height: 28px; }
.quick { display: flex; align-items: center; gap: 10px; height: 29px; margin-left: auto; padding: 0 11px; border: 1px solid #bbb; }
.quick svg { width: 19px; }
.mainnav { display: flex; align-items: center; gap: 11px; margin-left: 35px; padding-bottom: 3px; }
.mainnav a { display: flex; align-items: center; gap: 5px; }

.app { display: flex; flex: 1; min-height: 0; }

/* sidebar */
.sidebar { display: flex; flex-direction: column; width: 180px; overflow: hidden; border-right: 1px solid #ccc; }
.sidetools { display: flex; align-items: center; gap: 7px; height: 28px; padding-left: 7px; }
.sidetools .wide { width: 22px; height: 20px; }
.sidetools .arrow { width: 14px; height: 12px; margin: 0 10px 0 5px; }
.sidetools .tiny { width: 11px; height: 13px; }
.tree { flex: 1; border-right: 4px solid #e2ebf2; overflow: hidden; }
.tree h3 { display: flex; align-items: center; gap: 3px; height: 40px; padding-left: 6px; }
.tree .doc { width: 12px; height: 16px; }
.tree h3.leaf { height: 32px; padding-left: 20px; }
.tree h3.tight { height: 28px; padding-bottom: 10px; }
.minus { width: 9px; height: 9px; margin-right: 2px; border: 1px solid #999; background: linear-gradient(#777, #777) center / 5px 1px no-repeat; }
.tree li { height: 23px; padding-left: 22px; line-height: 22px; white-space: nowrap; overflow: hidden; }

/* main */
.main { display: flex; flex: 1; flex-direction: column; min-width: 0; }
.jobtabs { display: flex; justify-content: flex-end; height: 45px; padding: 20px 1px 0 0; }
.jobtabs a { display: flex; align-items: center; justify-content: center; gap: 7px; width: 105px; padding-bottom: 2px; border: 1px solid #ccc; border-width: 1px 0 0 1px; background: #f4f4f4; color: #777; }
.jobtabs .on { background: #c4e3f3; color: #111; }
.jobtabs svg { width: 14px; height: 12px; }
.titlebar { display: flex; align-items: center; gap: 7px; height: 28px; padding-left: 6px; border-bottom: 1px solid #ccc; background: #c4e3f3; color: #222; font-size: 13px; }
.titlebar svg { color: #95b4ea; }
.statusbar { display: grid; grid-template-columns: 1fr auto 1fr; align-items: center; height: 26px; padding: 0 5px; border-bottom: 1px solid #ccc; background: #f0f0f0; color: #111; }
.statusbar svg { vertical-align: middle; }
.statusbar .right { display: flex; align-items: center; justify-content: flex-end; gap: 13px; padding-right: 10px; }
.statusbar .phone { margin-left: 9px; }
.steps { display: flex; height: 37px; padding: 6px 6px; border-bottom: 1px solid #e9e9e9; }
.steps li {
  width: 153px;
  margin-right: -8px;
  padding-right: 12px;
  background: #e8ebf3;
  color: #8fa3c6;
  font-size: 12px;
  line-height: 24px;
  text-align: center;
  clip-path: polygon(0 0, calc(100% - 12px) 0, 100% 50%, calc(100% - 12px) 100%, 0 100%, 12px 50%);
}
.steps .done { background: #0070bd; color: #fff; }
.steps .now { background: #0090ff; color: #fff; }
.steps li:first-child { clip-path: polygon(0 0, calc(100% - 12px) 0, 100% 50%, calc(100% - 12px) 100%, 0 100%); border-radius: 8px 0 0 8px; }
.steps li:last-child { width: 140px; padding: 0; border-radius: 0 8px 8px 0; clip-path: polygon(0 0, 100% 0, 100% 100%, 0 100%, 12px 50%); }

.content { display: flex; flex: 1; align-items: flex-start; gap: 8px; min-height: 0; padding: 10px 1px 0 10px; overflow: hidden; }
.panel { border: 1px solid #e8e8e8; background: #fafafa; }
.details { width: 382px; padding: 10px 14px 20px; }
.details h2 { margin-bottom: 6px; color: #111; font-size: 17px; line-height: 24px; }
dl { display: grid; grid-template-columns: 110px 1fr; grid-auto-rows: minmax(17px, auto); }
.details dl { margin-bottom: 16px; }
dt { color: #808080; }
dd { color: #111; }
dd a { color: #1974ad; font-size: 12px; }
.ic { display: flex; align-items: center; gap: 6px; }
.ic svg, .who svg { width: 14px; height: 16px; }
.mbadge { width: 14px; height: 14px; border-radius: 3px; background: #cfe6de; font-weight: bold; line-height: 14px; text-align: center; }
.cust { display: flex; gap: 21px; padding-top: 1px; }
.cust svg { width: 14px; height: 14px; }
.stack { display: flex; flex-direction: column; }
.stack span:first-child { margin-bottom: 6px; }
.addr { padding: 1px 0; line-height: 14px; }
.map { display: block; width: 20px; height: 22px; margin-top: 6px; }

.right-col { width: 685px; }
.summary { display: flex; gap: 8px; margin-bottom: 9px; }
.summary .panel { flex: 1; height: 202px; padding: 13px 14px; }
.summary .panel + .panel { flex: none; width: 235px; }
.block { height: 121px; margin-bottom: 9px; }
.block h2 { display: flex; align-items: center; gap: 6px; height: 21px; padding: 0 5px 0 3px; border-bottom: 1px solid #ccc; background: #c4e3f3; color: #555; font-size: 12px; }
.block h2.soft { color: #7c8a92; }
.dim { opacity: .8; }
.new { display: flex; align-items: center; gap: 5px; margin-left: auto; color: #14803a; }
.new svg { width: 12px; height: 12px; }
.block .note, .block .link { width: 15px; height: 15px; }
.notes { height: 211px; }
.notes h2 { height: 24px; padding-right: 8px; }
.noteform { display: flex; }
.notebody { flex: 1; }
.scroll { width: 8px; height: 180px; background: #dcdcdc; }
.notehead { display: flex; justify-content: space-between; height: 21px; padding: 0 7px; border: 1px solid #ccc; border-width: 0 1px 1px; background: #fff; line-height: 20px; color: #555; }
.notearea { position: relative; height: 129px; }
.notearea textarea { display: block; width: 100%; height: 100%; margin: 0; padding: 8px; border: 1px solid #ccc; outline: 0; background: #fff; font: inherit; }
.caret { position: absolute; top: 7px; left: 8px; width: 1px; height: 15px; background: #000; }
.noteactions { display: flex; align-items: center; height: 27px; padding-left: 4px; font-size: 12px; color: #555; }
.noteactions input { width: 13px; height: 13px; margin: 0 6px 0 0; }
.hl { margin-left: auto; }
.noteactions select { width: 70px; height: 19px; margin: 0 17px 0 3px; border: 1px solid #bbb; background: #fff; }
.noteactions button { height: 23px; border-radius: 3px; color: #fff; }
.cancel { width: 58px; margin-right: 7px; background: #cfcfcf; }
.save { width: 105px; background: #1072bb; }
table { width: 100%; border-collapse: collapse; table-layout: fixed; line-height: 14px; }
td { height: 32px; padding: 0; color: #555; }
td svg { display: block; }
.when { width: 230px; padding-left: 5px; color: #777; }
.who { width: 187px; }
.who svg { display: inline-block; margin-right: 9px; vertical-align: middle; }
.card { width: 44px; }
.card svg { width: 16px; height: 14px; }
.what { width: 190px; padding-right: 20px; }
.tel svg { width: 10px; height: 16px; margin-left: 16px; }
.scroll.page { height: 647px; margin: -10px 0 0 auto; }

/* windows taskbar */
.taskbar { display: flex; height: 40px; background: #201f1d; color: #fff; }
.taskbar button { width: 48px; }
.taskbar .tv { margin-right: 2px; }
.taskbar svg { width: 16px; height: 16px; }
.taskbar .lg { width: 24px; height: 24px; }
.taskbar .run { width: 49px; background: linear-gradient(#76b9ed, #76b9ed) center bottom / 40px 2px no-repeat; }
.taskbar .current { background-size: 49px 2px; background-color: #4b4a49; }
.clock { margin-left: auto; padding: 2px 3px 0 0; line-height: 18px; text-align: center; }

/* overlays */
.tooltab { position: fixed; left: 7px; bottom: 54px; width: 16px; height: 16px; }
.avatar { position: fixed; left: 8px; bottom: 48px; width: 222px; height: 222px; }
.recorder { position: fixed; left: 248px; bottom: 56px; display: flex; align-items: center; gap: 15px; width: 305px; height: 52px; padding: 0 16px; border-radius: 26px; background: #1f1f1f; color: #fff; }
.recorder .stop { width: 36px; height: 36px; margin-right: -3px; border-radius: 50%; background: #ff5f3a; }
.stop::before { content: ""; width: 16px; height: 16px; border-radius: 1px; background: #fff; }
.recorder span { width: 33px; margin-left: 3px; font: bold 14px/17px Inter, sans-serif; }
.recorder i { width: 1px; height: 28px; background: #444; }
.ibeam { position: fixed; left: 739px; top: 599px; width: 14px; height: 25px; }
```
